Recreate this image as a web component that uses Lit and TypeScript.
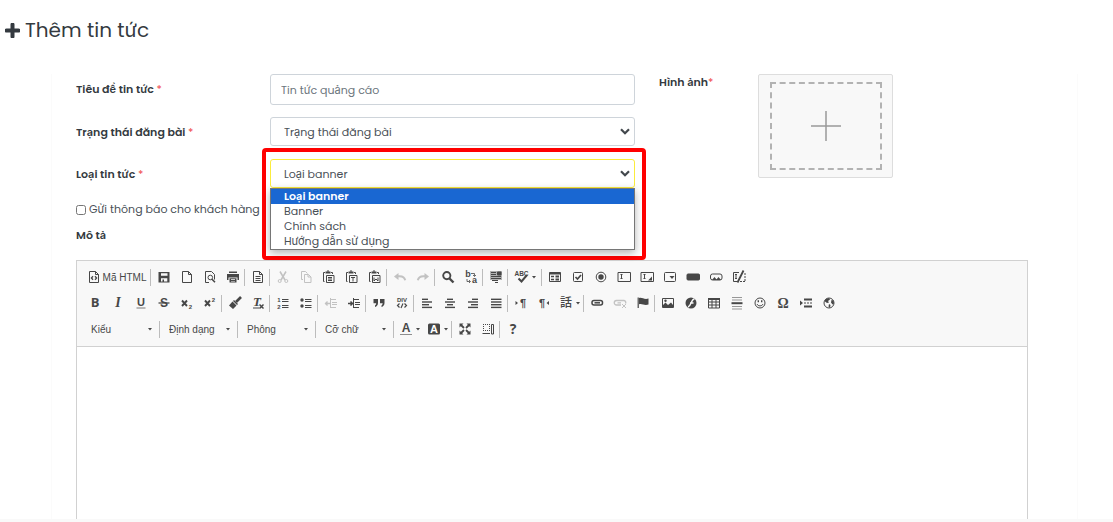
import { LitElement, html, css, svg, nothing } from "lit";
import { customElement } from "lit/decorators.js";

const page = svg`<path d="M2.5 1.5h6l3 3v8h-9z M8.5 1.5v3h3"/>`;
const clip = svg`<path d="M3 2.5h-1.5v9h1 M9 2.5h1.5v1.5"/><path d="M3.5 2.5h5" stroke-width="2"/><path d="M5 1h2" stroke-width="1"/><path d="M4.5 5.500h7.500v7h-7.500z"/>`;
const lines = (rows: number[][]) =>
  svg`${rows.map(([x, y, w]) => svg`<rect x=${x} y=${y} width=${w} height="1.4" fill="currentColor" stroke="none"/>`)}`;
const glyph = (t: string, size = 12, x = 7, y = 11, weight = 700, style = "normal", family = "Liberation Sans") =>
  svg`<text x=${x} y=${y} font-size=${size} font-weight=${weight} font-style=${style} font-family=${family} text-anchor="middle" fill="currentColor" stroke="none">${t}</text>`;

const icons: Record<string, unknown> = {
  source: svg`${page}<path d="M6 6.2 4.4 8 6 9.8 M8 6.2 9.6 8 8 9.8" stroke-width="1.3"/>`,
  save: svg`<path fill="currentColor" stroke="none" fill-rule="evenodd" d="M1.5 2h11v10.500h-11z M4 3.200v2.500h6.500V3.200z M4 8.300v3.200h1.500V9.500h1.500v2h3.300V8.300z"/>`,
  page,
  preview: svg`<path d="M6 12.500H2.500v-11h6l3 3v5"/><circle cx="7.300" cy="7.500" r="2.300"/><path d="m9 9.300 3 3" stroke-width="1.600"/>`,
  print: svg`<path fill="currentColor" stroke="none" fill-rule="evenodd" d="M3 1.500h8V3H3z M1 4h12v6h-1.500V7.500h-9V10H1z M3.500 8.300h7v4.200h-7z M5 9.300v.8h4v-.8z M5 10.900v.7h4v-.7z"/>`,
  templates: svg`${page}<path d="M4.500 6.500h5 M4.500 8.500h5 M4.500 10.500h5"/>`,
  cut: svg`<path d="M4 1.500 9 10 M10 1.500 5 10" stroke-width="1.500"/><circle cx="3.700" cy="11" r="1.500"/><circle cx="10.300" cy="11" r="1.500"/>`,
  copy: svg`<path d="M4 9.500H2.500v-8h4l2 2"/><path d="M5.500 4.500h4l2.500 2.500v5.500H5.500z M9 4.500V7h3"/>`,
  paste: svg`${clip}<path d="M6 7.500h4 M6 9h4 M6 10.500h4"/>`,
  pasteText: svg`${clip}<path d="M6 7.500h4 M8 7.500v4"/>`,
  pasteWord: svg`${clip}<path d="M6 7.500v3.500l2-2 2 2V7.500"/>`,
  undo: svg`<path d="M5.500 3v7L1 6.500z" fill="currentColor" stroke="none"/><path d="M5 6.300c4-.5 6.500 1 7.200 4" stroke-width="2"/>`,
  redo: svg`<path d="M8.500 3v7L13 6.500z" fill="currentColor" stroke="none"/><path d="M9 6.300c-4-.5-6.500 1-7.200 4" stroke-width="2"/>`,
  find: svg`<circle cx="5.800" cy="5.600" r="3.600" stroke-width="1.900"/><path d="m8.500 8.500 4 4" stroke-width="2.400"/>`,
  replace: svg`${glyph("b", 9, 4, 7)}${glyph("a", 9, 10.500, 13)}<path d="M7 3.500h3.500v2.500 M9 5l1.500 1.500L12 5 M3 9v2.500h3 M5 10l1.500 1.500L5 13" stroke-width=".8"/>`,
  selectAll: svg`<path fill="currentColor" opacity=".4" stroke="none" d="M1 1h12v9H1z"/><path d="M2 2.500h5 M2 4.500h5 M2 6.500h10 M2 8.500h10 M3 10.500h6 M6 12.500h3"/><path d="M8.500 2h3.500v3H8.500z" fill="currentColor"/>`,
  spell: svg`${glyph("ABC", 6.500, 6.500, 6)}<path d="m3.500 8.500 3 3L12 5" stroke-width="2"/>`,
  form: svg`<path d="M1.500 2.500h11v9h-11z"/><path d="M1.500 3.500h11" stroke-width="2"/><path d="M3 6.500h3 M3 9.500h3" stroke-width="1.500"/><path d="M7.500 6.500H11 M7.500 9.500H11" stroke-width="2"/>`,
  checkbox: svg`<rect x="2.500" y="2.500" width="9" height="9" rx="1"/><path d="m4.500 7 2 2 3.500-4" stroke-width="1.700"/>`,
  radio: svg`<circle cx="7" cy="7" r="4.800"/><circle cx="7" cy="7" r="2.700" fill="currentColor" stroke="none"/>`,
  textField: svg`<path d="M1 2.500h12.500v9H1z M3.500 4.500h2 M4.500 4.500v4 M3.500 8.500h2"/>`,
  textArea: svg`<path d="M1 2.500h12.500v9H1z M3.500 4.500h2 M4.500 4.500v4 M3.500 8.500h2"/><path d="M12 6.500v4H8z" fill="currentColor" stroke="none"/>`,
  selectBox: svg`<rect x="1.500" y="2.500" width="11" height="9" rx="1"/><path d="M6.500 6h5L9 9z" fill="currentColor" stroke="none"/>`,
  button: svg`<rect x="1" y="4" width="12.500" height="6" rx="1" fill="currentColor"/>`,
  imageButton: svg`<rect x="1.500" y="4" width="11.500" height="6" rx="2"/><path d="M3 10l2.500-3 2 2.500L9.500 7l2.500 3z" fill="currentColor" stroke="none"/>`,
  hidden: svg`<path d="M7 2.500H1.500v9H5 M3 4.500h2 M4 4.500v4 M3 8.500h2"/><path d="m11.500.500-6 12" stroke-width="1.800"/><path d="M13 3v9 M8 11.500h5" stroke-dasharray="2 1"/>`,
  bold: glyph("B", 13, 7, 11, 700, "normal", "Open Sans"),
  italic: glyph("I", 14, 7, 11, 700, "italic", "Liberation Serif"),
  underline: svg`${glyph("U", 11, 7, 10)}<path d="M2.500 12h9" opacity=".6" stroke-width="1.200"/>`,
  strike: svg`${glyph("S", 12, 7, 11)}<path d="M1.500 7h11" stroke-width="1.300"/>`,
  sub: svg`<path d="m2 4.500 5 5.500 M7 4.500 2 10" stroke-width="1.900"/>${glyph("2", 6, 10.500, 12.500)}`,
  sup: svg`<path d="m2 4.500 5 5.500 M7 4.500 2 10" stroke-width="1.900"/>${glyph("2", 6, 10.500, 6)}`,
  brush: svg`<path d="M13 1 8 6" stroke-width="2.600"/><path d="m6 4 4 4-1 1-4-4z M4.500 5.500 8.500 9.500 5 13 1 9.500z" fill="currentColor" stroke="none"/>`,
  clearFormat: svg`${glyph("T", 13, 6, 10, 700, "italic", "Liberation Serif")}<path d="M2 12h6"/><path d="m8.500 8.500 4 4 M12.500 8.500l-4 4" stroke-width="1.500"/>`,
  ordered: svg`${glyph("1", 6, 3, 5.500)}${glyph("2", 6, 3, 12.500)}<path d="M6 3.500h6.500 M6 5.500h6.500 M6 9.500h6.500 M6 11.500h6.500"/>`,
  bulleted: svg`<circle cx="3" cy="4" r="1.700" fill="currentColor" stroke="none"/><circle cx="3" cy="10" r="1.700" fill="currentColor" stroke="none"/><path d="M6 3.500h6.500 M6 5.500h6.500 M6 9.500h6.500 M6 11.500h6.500"/>`,
  outdent: svg`<path d="M6.500 2v10 M7 3.500h5 M8 6.500h5 M8 8.500h5 M7 11.500h5"/><path d="M1 7.500h5 M3.500 5.500l-2 2 2 2" stroke-width="1.300"/>`,
  indent: svg`<path d="M6.500 2v10 M7 3.500h5 M8 6.500h5 M8 8.500h5 M7 11.500h5"/><path d="M1 7.500h5 M3.500 5.500l2 2-2 2" stroke-width="1.500"/>`,
  quote: svg`<path fill="currentColor" stroke="none" d="M1.500 3H6v4c0 2-1.200 3.500-3 4V9.500c.8-.5 1.200-1.200 1.200-2.200H1.500z M8 3h4.500v4c0 2-1.200 3.500-3 4V9.500c.8-.5 1.200-1.200 1.200-2.200H8z"/>`,
  div: svg`${glyph("DIV", 6, 7, 6)}<path d="M4.500 7.500 2.500 9.500l2 2 M9.500 7.500l2 2-2 2 M8 7.500l-2 4.500" stroke-width="1.200"/>`,
  left: lines([[2, 2.600, 6], [2, 5.300, 10], [2, 8, 7], [2, 10.700, 10]]),
  center: lines([[4, 2.600, 6], [2, 5.300, 10], [4, 8, 6], [2, 10.700, 10]]),
  right: lines([[6, 2.600, 6], [2, 5.300, 10], [5, 8, 7], [2, 10.700, 10]]),
  justify: lines([[2, 2.600, 10.500], [2, 5.300, 10.500], [2, 8, 10.500], [2, 10.700, 10.500]]),
  ltr: svg`<path d="M1.500 5v4L4 7z" fill="currentColor" stroke="none"/>${glyph("¶", 11, 9, 10.500)}`,
  rtl: svg`${glyph("¶", 11, 5, 10.500)}<path d="M12 5v4L9.500 7z" fill="currentColor" stroke="none"/>`,
  language: glyph("話", 12, 7, 11, 500, "normal", "Noto Sans CJK JP"),
  link: svg`<rect x="2" y="4.500" width="10.500" height="4.500" rx="2" stroke-width="1.500"/><path d="M4.500 6.800H10" stroke-width="1.500"/>`,
  unlink: svg`<path d="M8 9H3.500a2 2 0 0 1 0-4.500h7.500a2 2 0 0 1 1.500 3 M4.500 6.800H8" stroke-width="1.300"/><path d="m9 8 4 4 M13 8l-4 4"/>`,
  anchor: svg`<path d="M2.200 1.500V12" stroke-width="1.200"/><path d="M3 2c3-1.200 5 2 9.500.5v6C8 10 6 7 3 8.300z" fill="currentColor" stroke="none"/>`,
  image: svg`<path d="M1.500 2.500h11v9h-11z"/><path d="M2 11V9l2.500-2.500L7 9l3-2.500L12 9v2z" fill="currentColor" stroke="none"/><circle cx="4.500" cy="4.700" r="1.200" fill="currentColor" stroke="none"/>`,
  flash: svg`<circle cx="7" cy="7" r="5.500" fill="currentColor" stroke="none"/><path d="M10.500 3C7 3 7.500 10 4 11 M6 7h3.500" stroke="#f8f8f8" stroke-width="1.500"/>`,
  table: svg`<path d="M1.500 2.500h11v9.500h-11z M5 4v8 M9 4v8 M1.500 6h11 M1.500 9h11"/><path d="M1 3h12" stroke-width="2"/>`,
  rule: svg`<path d="M2 1.500h10 M2 4h10 M2 10.500h10 M2 13h10" opacity=".55"/><path d="M1.500 7.200h11" stroke-width="2"/>`,
  smiley: svg`<circle cx="7" cy="7" r="5"/><path d="M4 8c1 2.500 5 2.500 6 0"/><path d="M5.300 4.300v2 M8.700 4.300v2" stroke-width="1.400"/>`,
  omega: glyph("Ω", 14, 7, 12, 700, "normal", "Liberation Serif"),
  pageBreak: svg`<path d="M1 4.500v5L4 7z" fill="currentColor" stroke="none"/><path d="M5 3.500h8 M5 10.500h8" stroke-width="1.800"/><path d="M5 7h8" stroke-dasharray="2 1"/>`,
  globe: svg`<circle cx="7" cy="7" r="5"/><path d="M3 3.500 7 2l1 1.500-2 1.500 1 1.500L5 7 3 5.500z M7 8l1.500 1-.5 3-1.500-1.500z M9.500 4l2 .5.500 3-1.500 1L9 6.500z" fill="currentColor" stroke="none"/>`,
  textColor: svg`${glyph("A", 12, 7, 10)}<path d="M1 12.500h12" opacity=".6"/>`,
  bgColor: svg`<rect x="1" y="1.500" width="12" height="11" rx="1.500" fill="currentColor" stroke="none"/><text x="7" y="11" font-size="11" font-weight="700" font-family="Liberation Sans" text-anchor="middle" fill="#fff" stroke="none">A</text>`,
  maximize: svg`<path d="M1.500 1.500h4l-4 4z M12.500 1.500h-4l4 4z M1.500 12.500h4l-4-4z M12.500 12.500h-4l4-4z" fill="currentColor" stroke="none"/><path d="M3 3l3 3 M11 3 8 6 M3 11l3-3 M11 11 8 8" stroke-width="1.800"/>`,
  blocks: svg`<path d="M2 2.500h6.500 M2 8.500h6.500 M2.500 2v7 M8.500 2v7" stroke-dasharray="1 1"/><path d="M10.500 2.500h2v9.500h-2z M1.500 11.500h7.500"/>`,
  about: glyph("?", 14, 7, 12, 700, "normal", "Open Sans"),
};

type Tool = { icon: string; title: string; off?: boolean; caret?: boolean; wide?: boolean; text?: string };
const t = (icon: string, title: string, extra: Partial<Tool> = {}): Tool => ({ icon, title, ...extra });
const off = { off: true };

const rowOne: Tool[][] = [
  [t("source", "Mã HTML", { text: "Mã HTML" })],
  [t("save", "Lưu"), t("page", "Trang mới"), t("preview", "Xem trước"), t("print", "In")],
  [t("templates", "Mẫu dựng sẵn")],
  [t("cut", "Cắt", off), t("copy", "Sao chép", off), t("paste", "Dán"), t("pasteText", "Dán văn bản"), t("pasteWord", "Dán từ Word")],
  [t("undo", "Hoàn tác", off), t("redo", "Làm lại", off)],
  [t("find", "Tìm kiếm"), t("replace", "Thay thế")],
  [t("selectAll", "Chọn tất cả")],
  [t("spell", "Kiểm tra chính tả", { caret: true, wide: true })],
  [t("form", "Biểu mẫu"), t("checkbox", "Nút kiểm"), t("radio", "Nút chọn"), t("textField", "Trường văn bản"), t("textArea", "Vùng văn bản"), t("selectBox", "Ô chọn"), t("button", "Nút"), t("imageButton", "Nút hình ảnh"), t("hidden", "Trường ẩn")],
];
const rowTwo: Tool[][] = [
  [t("bold", "Đậm"), t("italic", "Nghiêng"), t("underline", "Gạch chân"), t("strike", "Gạch ngang"), t("sub", "Chỉ số dưới"), t("sup", "Chỉ số trên")],
  [t("brush", "Sao chép định dạng"), t("clearFormat", "Xoá định dạng")],
  [t("ordered", "Danh sách có thứ tự"), t("bulleted", "Danh sách")],
  [t("outdent", "Giảm thụt lề", off), t("indent", "Tăng thụt lề")],
  [t("quote", "Trích dẫn"), t("div", "Tạo khối")],
  [t("left", "Canh trái"), t("center", "Canh giữa"), t("right", "Canh phải"), t("justify", "Canh đều")],
  [t("ltr", "Trái sang phải"), t("rtl", "Phải sang trái"), t("language", "Ngôn ngữ", { caret: true })],
  [t("link", "Liên kết"), t("unlink", "Xoá liên kết", off), t("anchor", "Điểm neo")],
  [t("image", "Hình ảnh"), t("flash", "Flash"), t("table", "Bảng"), t("rule", "Đường ngang"), t("smiley", "Biểu cảm"), t("omega", "Ký tự đặc biệt"), t("pageBreak", "Ngắt trang"), t("globe", "Khung nội tuyến")],
];
const rowThree: Tool[][] = [
  [t("textColor", "Màu chữ", { caret: true }), t("bgColor", "Màu nền", { caret: true })],
  [t("maximize", "Phóng to"), t("blocks", "Hiện khối")],
  [t("about", "Thông tin")],
];
const combos = ["Kiểu", "Định dạng", "Phông", "Cỡ chữ"];
const caret = html`<svg class="caret" viewBox="0 0 4 3" aria-hidden="true"><path d="M0 0h4L2 2.500z" fill="currentColor"/></svg>`;

@customElement("rich-editor")
class RichEditor extends LitElement {
  static styles = css`
    :host { display: flex; flex-direction: column; border: 1px solid #d1d1d1; border-bottom: 0; box-sizing: border-box; }
    .toolbar { background: #f8f8f8; border-bottom: 1px solid #d1d1d1; padding: 3px 6px 4px; }
    .row { display: flex; flex-wrap: wrap; }
    .group { display: flex; align-items: center; height: 26px; }
    .group + .group::before { content: ""; width: 1px; height: 17px; background: #bcbcbc; margin-right: 1px; }
    button, select { border: 0; background: none; font: 10px "Liberation Sans", Arial, sans-serif; color: #484848; margin: 0; }
    button { display: flex; align-items: center; justify-content: center; width: 23px; height: 22px; padding: 0; color: #474747; }
    button.labelled { width: 67px; gap: 2px; }
    button.dropdown { width: 28px; gap: 3px; }
    button.wide { width: 32px; }
    button:disabled { opacity: 0.3; }
    .icon { width: 14px; height: 14px; flex: none; overflow: visible; }
    .caret { width: 4px; height: 3px; flex: none; color: #474747; }
    .combo { display: grid; align-items: center; width: 76px; }
    .combo > * { grid-area: 1 / 1; }
    .combo select { appearance: none; width: 100%; height: 22px; padding: 0 8px; }
    .combo .caret { justify-self: end; margin-right: 7px; pointer-events: none; }
    .canvas { flex: 1; min-height: 120px; padding: 16px; background: #fff; outline: 0; font: 13px "Liberation Sans", Arial, sans-serif; }
  `;
  private tool(b: Tool) {
    const cls = b.text ? "labelled" : b.caret ? (b.wide ? "dropdown wide" : "dropdown") : "";
    return html`<button type="button" class=${cls} title=${b.title} aria-label=${b.title} ?disabled=${b.off}><svg class="icon" viewBox="0 0 14 14" fill="none" stroke="currentColor" aria-hidden="true">${icons[b.icon]}</svg>${b.text ?? nothing}${b.caret ? caret : nothing}</button>`;
  }
  private groups(g: Tool[][]) {
    return g.map((x) => html`<div class="group">${x.map((b) => this.tool(b))}</div>`);
  }
  render() {
    return html`
      <div class="toolbar" role="toolbar" aria-label="Mô tả">
        <div class="row">${this.groups(rowOne)}</div>
        <div class="row">${this.groups(rowTwo)}</div>
        <div class="row">
          ${combos.map((c) => html`<div class="group"><div class="combo"><select aria-label=${c}><option>${c}</option></select>${caret}</div></div>`)}
          ${this.groups(rowThree)}
        </div>
      </div>
      <div class="canvas" contenteditable="true" role="textbox" aria-multiline="true" aria-label="Mô tả"></div>`;
  }
}

@customElement("app-root")
class AppRoot extends LitElement {
  static styles = css`
    :host { display: flex; flex-direction: column; min-height: 100vh; box-sizing: border-box; border-bottom: 3px solid #f9f9f9; background: #fff; color: #343a40; font: 11px/16px Poppins, Inter, sans-serif; }
    .title { display: flex; align-items: center; gap: 5px; margin: 0; padding: 15px 5px 0; font-size: 20px; line-height: 30px; font-weight: 400; }
    .title svg { width: 15px; height: 15px; }
    .card { flex: 1; display: flex; flex-direction: column; margin: 29px 35px 0 51px; padding: 0 49px 0 24px; border: 0 solid #fbfbfb; border-width: 0 1px; }
    .form { display: grid; grid-template-columns: 194fr 365fr 24fr 99fr 270fr; grid-template-rows: 31px 30px 29px; row-gap: 12px; }
    .name { grid-column: 1; align-self: start; line-height: 30px; font-weight: 600; }
    .req { color: #f0464b; font-weight: 400; }
    .control { grid-column: 2; }
    .input { width: 100%; height: 31px; box-sizing: border-box; padding: 2px 10px 0; border: 1px solid #ced4da; border-radius: 3px; background: #fff; color: #495057; font: inherit; outline: 0; }
    .input::placeholder { color: #6c757d; opacity: 1; }
    .field { position: relative; line-height: 15px; }
    .box { display: grid; align-items: center; }
    .box > * { grid-area: 1 / 1; }
    .box select { appearance: none; width: 100%; height: 29px; box-sizing: border-box; padding: 2px 24px 0 13px; border: 1px solid #ced4da; border-radius: 3px; background: #fff; color: #495057; font: inherit; outline: 0; }
    .field.open select { border-color: #fbec3c; }
    .arrow { width: 10px; height: 7px; justify-self: end; margin-right: 5px; color: #43484d; pointer-events: none; }
    .list { position: absolute; z-index: 2; top: 29px; left: 0; right: 0; margin: 0; padding: 0; list-style: none; border: 1px solid #767676; background: #fff; color: #495057; box-shadow: 0 3px 8px rgba(0, 0, 0, 0.3); }
    .item { padding: 0 13px; }
    .item.active { background: #1967d2; color: #fff; font-weight: 600; }
    .frame { position: absolute; z-index: 1; top: -11px; bottom: -72px; left: -8px; right: -11px; border: 4px solid #f00; border-radius: 4px; pointer-events: none; }
    .picture-name { grid-area: 1 / 4; font-weight: 600; }
    .upload { grid-area: 1 / 5 / 4 / 6; justify-self: start; align-self: start; display: flex; width: 135px; height: 104px; padding: 7px 10px 7px 11px; border: 1px solid #ddd; border-radius: 2px; background: #f8f8f8; }
    .drop { flex: 1; align-self: stretch; display: flex; align-items: center; justify-content: center; border: 2px dashed #b2b2b2; }
    .drop svg { width: 30px; height: 30px; }
    .notify { display: flex; align-items: center; gap: 3px; margin-top: 13px; color: #495057; }
    .notify input { width: 10px; height: 10px; margin: 2px 0 0; }
    .describe { margin: 10px 0 17px; font-size: 11px; font-weight: 600; }
    rich-editor { flex: 1; }
  `;
  private field(id: string, options: string[], open = false) {
    return html`
      <div class="field control ${open ? "open" : ""}">
        <div class="box">
          <select id=${id}>${options.map((o) => html`<option>${o}</option>`)}</select>
          <svg class="arrow" viewBox="0 0 10 7" fill="none" stroke="currentColor" stroke-width="2.200" aria-hidden="true"><path d="m1 1.200 4 4 4-4"/></svg>
        </div>
        ${open
          ? html`<div class="frame"></div>
              <ul class="list" role="listbox" aria-label=${options[0]}>
                ${options.map((o, i) => html`<li class="item ${i ? "" : "active"}" role="option" aria-selected=${i ? "false" : "true"}>${o}</li>`)}
              </ul>`
          : nothing}
      </div>`;
  }
  render() {
    const star = html`<span class="req">*</span>`;
    return html`
      <h1 class="title"><svg viewBox="0 0 15 15" aria-hidden="true"><path d="M7.500 1.500v12 M1.500 7.500h12" stroke="currentColor" stroke-width="4" stroke-linecap="round"/></svg>Thêm tin tức</h1>
      <main class="card">
        <div class="form">
          <label class="name" for="title">Tiêu đề tin tức ${star}</label>
          <input class="input control" id="title" type="text" placeholder="Tin tức quảng cáo">
          <label class="name" for="status">Trạng thái đăng bài ${star}</label>
          ${this.field("status", ["Trạng thái đăng bài"])}
          <label class="name" for="kind">Loại tin tức ${star}</label>
          ${this.field("kind", ["Loại banner", "Banner", "Chính sách", "Hướng dẫn sử dụng"], true)}
          <span class="picture-name">Hình ảnh${star}</span>
          <button class="upload" type="button" aria-label="Hình ảnh"><span class="drop"><svg viewBox="0 0 30 30" stroke="#999" stroke-width="1.500" aria-hidden="true"><path d="M15 0v30 M0 15h30"/></svg></span></button>
        </div>
        <label class="notify"><input type="checkbox">Gửi thông báo cho khách hàng</label>
        <h2 class="describe">Mô tả</h2>
        <rich-editor></rich-editor>
      </main>`;
  }
}
